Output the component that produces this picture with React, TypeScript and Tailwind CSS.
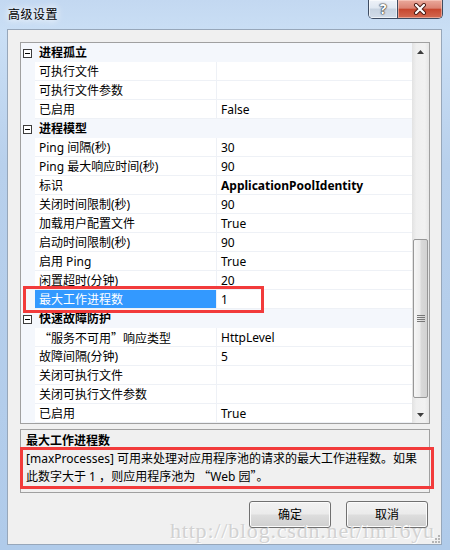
import React from 'react';

type Row =
  | { cat: true; label: string }
  | { cat?: false; label: React.ReactNode; value?: string; bold?: boolean; selected?: boolean };

const Q = ({ children }: { children: React.ReactNode }) => (
  <span className="font-['Noto_Sans_CJK_SC',sans-serif]">{children}</span>
);

const rows: Row[] = [
  { cat: true, label: '进程孤立' },
  { label: '可执行文件', value: '' },
  { label: '可执行文件参数', value: '' },
  { label: '已启用', value: 'False' },
  { cat: true, label: '进程模型' },
  { label: 'Ping 间隔(秒)', value: '30' },
  { label: 'Ping 最大响应时间(秒)', value: '90' },
  { label: '标识', value: 'ApplicationPoolIdentity', bold: true },
  { label: '关闭时间限制(秒)', value: '90' },
  { label: '加载用户配置文件', value: 'True' },
  { label: '启动时间限制(秒)', value: '90' },
  { label: '启用 Ping', value: 'True' },
  { label: '闲置超时(分钟)', value: '20' },
  { label: '最大工作进程数', value: '1', selected: true },
  { cat: true, label: '快速故障防护' },
  {
    label: (
      <>
        <Q>“</Q>服务不可用<Q>”</Q>响应类型
      </>
    ),
    value: 'HttpLevel',
  },
  { label: '故障间隔(分钟)', value: '5' },
  { label: '关闭可执行文件', value: '' },
  { label: '关闭可执行文件参数', value: '' },
  { label: '已启用', value: 'True' },
];

function MinusBox() {
  return (
    <svg width="9" height="9" viewBox="0 0 9 9">
      <rect x="0.5" y="0.5" width="8" height="8" fill="#fff" stroke="#3c3c3c" />
      <line x1="2" y1="4.5" x2="7" y2="4.5" stroke="#000" />
    </svg>
  );
}

function GridRow({ row }: { row: Row }) {
  if (row.cat) {
    return (
      <div className="flex h-[19px] bg-[#f4f7fc]">
        <div className="flex w-[14px] items-center pl-[2px] pt-[1px]">
          <MinusBox />
        </div>
        <div className="pl-1 pt-[1px] text-[12px] font-bold leading-[18px] text-black">{row.label}</div>
      </div>
    );
  }
  return (
    <div className="flex h-[19px]">
      <div className="w-[14px] bg-[#f4f7fc]" />
      <div
        className={`w-[182px] truncate border-b border-r border-[#eef1f6] pl-1 pt-[2px] text-[12px] leading-[16px] ${
          row.selected ? 'bg-[#3399ff] text-white' : 'text-black'
        }`}
      >
        {row.label}
      </div>
      <div
        className={`flex-1 border-b border-[#eef1f6] pl-1 pt-[2px] text-[12px] leading-[16px] text-black ${
          row.bold ? 'font-bold' : ''
        }`}
      >
        {row.value}
      </div>
    </div>
  );
}

function Scrollbar() {
  return (
    <div className="flex w-[17px] flex-col bg-[linear-gradient(90deg,#e2e2e2,#efefef_25%,#f1f1f1_75%,#e6e6e6)]">
      <div className="flex h-[17px] items-center justify-center">
        <svg width="7" height="4" viewBox="0 0 7 4">
          <path d="M3.5 0 L7 4 L0 4 Z" fill="#3d3d3d" />
        </svg>
      </div>
      <div className="flex-1 px-[1px]">
        <div className="mt-[179px] flex h-[159px] items-center justify-center rounded-[2px] border border-[#979797] bg-[linear-gradient(90deg,#f6f6f6,#ececec_45%,#d9d9d9_55%,#d2d2d2)]">
          <svg width="8" height="8" viewBox="0 0 8 8">
            <line x1="0" y1="0.5" x2="8" y2="0.5" stroke="#777" />
            <line x1="0" y1="2.5" x2="8" y2="2.5" stroke="#777" />
            <line x1="0" y1="4.5" x2="8" y2="4.5" stroke="#777" />
            <line x1="0" y1="6.5" x2="8" y2="6.5" stroke="#777" />
          </svg>
        </div>
      </div>
      <div className="flex h-[17px] items-center justify-center">
        <svg width="7" height="4" viewBox="0 0 7 4">
          <path d="M0 0 L7 0 L3.5 4 Z" fill="#3d3d3d" />
        </svg>
      </div>
    </div>
  );
}

function DlgButton({ children }: { children: React.ReactNode }) {
  return (
    <div className="flex h-[27px] w-[82px] items-center justify-center rounded-[3px] border border-[#707070] bg-[linear-gradient(180deg,#f2f2f2_0%,#ebebeb_48%,#dddddd_52%,#cfcfcf_100%)] text-[12px] text-black shadow-[inset_0_0_0_1px_#fbfbfb]">
      {children}
    </div>
  );
}

export default function App() {
  return (
    <div className="relative flex h-[550px] w-[450px] flex-col overflow-hidden bg-[linear-gradient(180deg,#c3d8f1_0%,#cadff5_6%,#b8d0ec_30%,#b0cbea_100%)] font-['Noto_Sans','Noto_Sans_CJK_SC',sans-serif]">
      {/* Title bar */}
      <div className="flex h-[29px] items-start justify-between">
        <span className="ml-[8px] mt-[6px] text-[12px] leading-[18px] tracking-[0.5px] text-black [text-shadow:0_0_6px_#fff,0_0_10px_#fff]">
          高级设置
        </span>
        <div className="mr-[7px] flex h-[19px] overflow-hidden rounded-b-[5px] border border-t-0 border-[#3e4c62]">
          <div className="flex w-[28px] items-center justify-center bg-[linear-gradient(180deg,#eef2f8_0%,#dfe7f1_45%,#c6d2e0_50%,#d2dce9_100%)] shadow-[inset_0_0_0_1px_rgba(255,255,255,0.6)]">
            <span className="text-[14px] font-bold leading-none text-white [text-shadow:0_0_1px_#2a2a2a,0_0_1px_#2a2a2a,0_0_2px_#2a2a2a]">
              ?
            </span>
          </div>
          <div className="flex w-[45px] items-center justify-center border-l border-[#3e4c62] bg-[linear-gradient(180deg,#eaa99c_0%,#db8373_45%,#c7472f_52%,#d36a52_100%)] shadow-[inset_0_0_0_1px_rgba(255,220,210,0.5)]">
            <svg width="14" height="12" viewBox="0 0 14 12">
              <path d="M3 2 L11 10 M11 2 L3 10" stroke="#4a1a14" strokeWidth="4" strokeLinecap="round" />
              <path d="M3 2 L11 10 M11 2 L3 10" stroke="#fff" strokeWidth="2.2" strokeLinecap="round" />
            </svg>
          </div>
        </div>
      </div>

      {/* Client area */}
      <div className="relative mb-[5px] ml-[7px] mr-[8px] flex flex-1 flex-col border border-[#97a7ba] bg-[#f0f0f0] pl-[12px] pr-[11px] pt-[12px]">
        {/* Property grid */}
        <div className="flex h-[382px] border border-[#a0a0a0] bg-white">
          <div className="flex flex-1 flex-col">
            {rows.map((r, i) => (
              <GridRow key={i} row={r} />
            ))}
          </div>
          <Scrollbar />
        </div>

        {/* Description panel */}
        <div className="mt-[5px] h-[64px] border border-[#a0a0a0] bg-[#f0f0f0] pl-[5px] pt-[2px]">
          <div className="text-[12px] font-bold leading-[17px] text-black">最大工作进程数</div>
          <div className="mt-[1px] text-[12px] leading-[17px] text-black">
            <div className="whitespace-nowrap">[maxProcesses] 可用来处理对应用程序池的请求的最大工作进程数。如果</div>
            <div className="whitespace-nowrap">
              此数字大于 1 <Q>，</Q>则应用程序池为 <Q>“</Q>Web 园<Q>”</Q>。
            </div>
          </div>
        </div>

        {/* Buttons */}
        <div className="mr-[2px] mt-[8px] flex justify-end gap-[15px]">
          <DlgButton>确定</DlgButton>
          <DlgButton>取消</DlgButton>
        </div>

        {/* Resize grip */}
        <svg className="absolute bottom-[1px] right-[1px]" width="10" height="10" viewBox="0 0 10 10">
          {[
            [8, 2],
            [8, 5],
            [5, 5],
            [8, 8],
            [5, 8],
            [2, 8],
          ].map(([x, y], i) => (
            <rect key={i} x={x} y={y} width="2" height="2" fill="#b5b5b5" />
          ))}
        </svg>
      </div>

      {/* Annotation: selected row highlight */}
      <div className="pointer-events-none absolute left-[23px] top-[286px] h-[27px] w-[241px] border-[3px] border-[#f23b3b]" />
      {/* Annotation: description highlight */}
      <div className="pointer-events-none absolute left-[20px] top-[447px] h-[42px] w-[414px] border-[3px] border-[#f23b3b]" />

      {/* Watermark */}
      <div className="pointer-events-none absolute left-[170px] top-[520px] whitespace-nowrap font-['Liberation_Serif',serif] text-[22px] leading-none tracking-[0.8px] text-[#d2d2d2] [text-shadow:1px_1px_0_#ffffff]">
        http://blog.csdn.net/im16yu
      </div>
    </div>
  );
}
